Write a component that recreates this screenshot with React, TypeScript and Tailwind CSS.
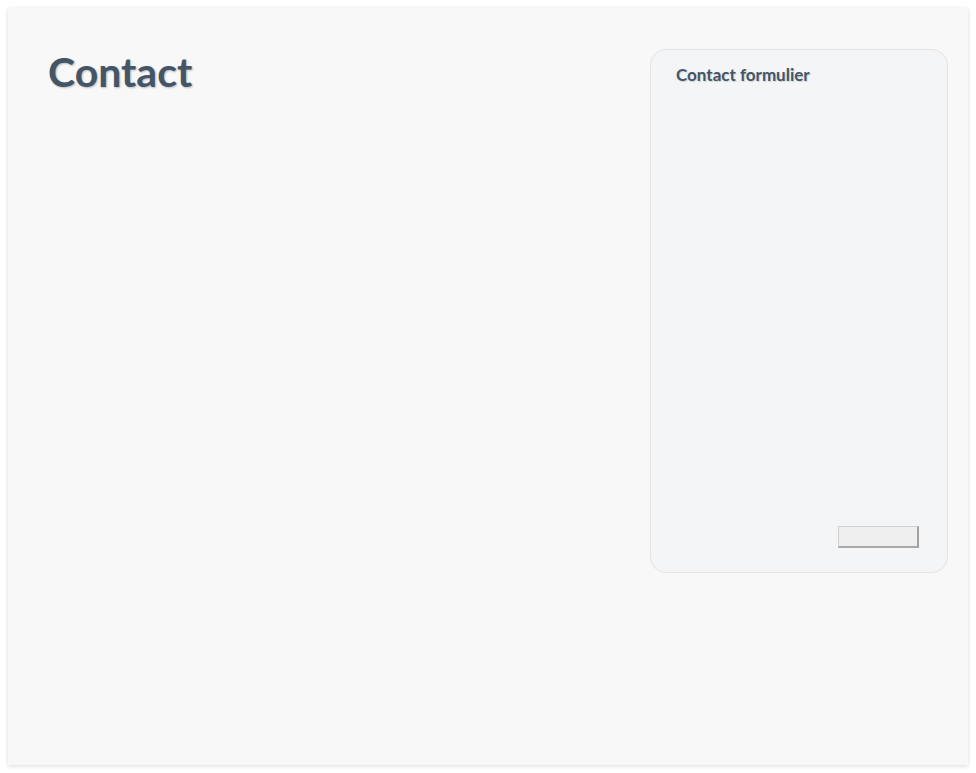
import React from 'react'

/**
 * Contact page with an empty form panel
 */
export default function App() {
  return (
    <div className="w-full min-h-screen bg-white p-2 font-['Lato',sans-serif]">
      <div className="h-[757px] bg-[#f8f8f8] shadow-[0_1px_4px_rgba(0,0,0,0.15)] flex justify-between pl-10 pr-5 pt-[41px]">
        <h1 className="text-[41px] leading-none font-bold text-[#435566] mt-[2px] [text-shadow:1px_1px_2px_rgba(0,0,0,0.25)]">
          Contact
        </h1>

        {/* Form panel */}
        <div className="w-[298px] h-[524px] bg-[#f4f5f7] border border-[#e4e4e4] rounded-2xl flex flex-col pl-[25px] pr-7 pt-[12px] pb-6">
          <h2 className="text-[17px] font-bold text-[#435566] [text-shadow:1px_1px_1px_rgba(0,0,0,0.15)]">
            Contact formulier
          </h2>
          <div className="flex-1" />
          <div className="flex justify-end">
            <button className="w-[81px] h-[22px] bg-[#efefef] border-t border-l border-[#d0d0d0] border-r-2 border-b-2 border-r-[#a0a0a0] border-b-[#a8a8a8]" />
          </div>
        </div>
      </div>
    </div>
  )
}
